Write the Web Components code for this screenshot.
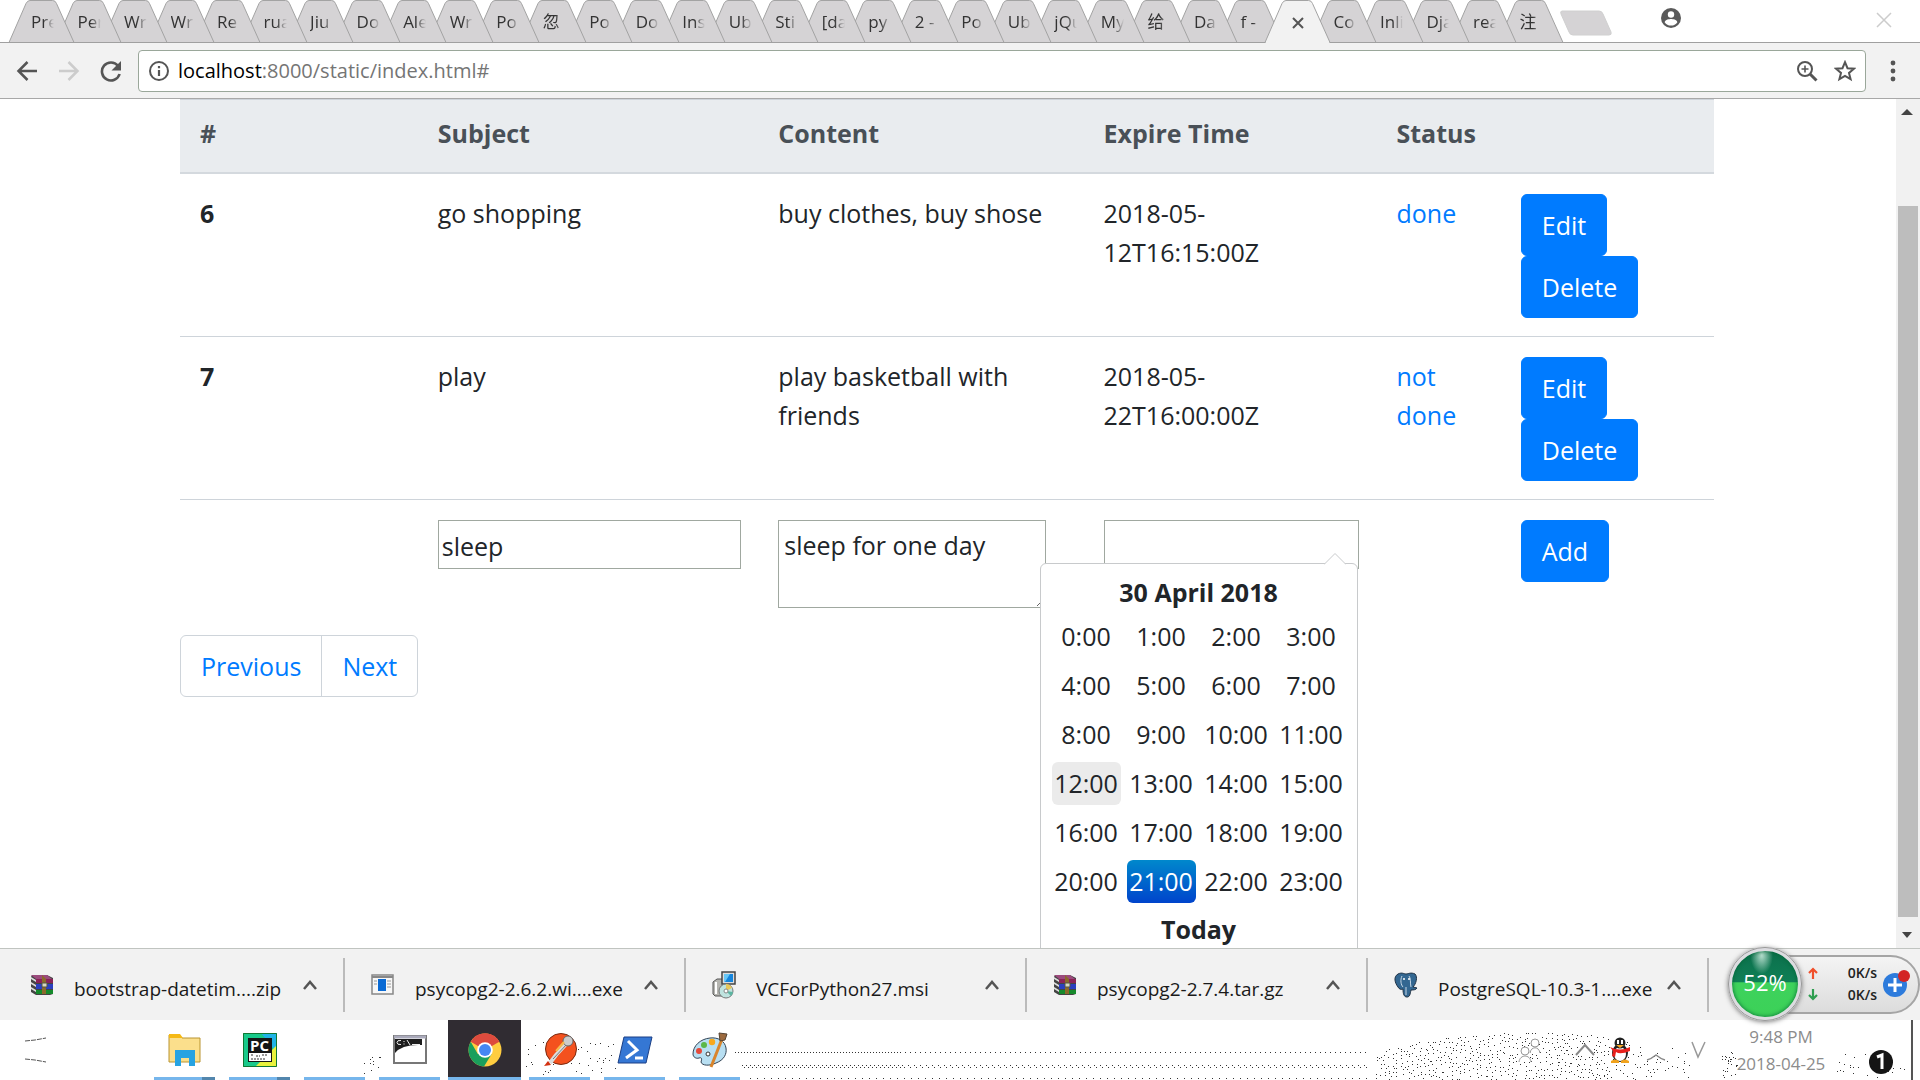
<!DOCTYPE html>
<html lang="en">
<head>
<meta charset="utf-8">
<title>index</title>
<style>
html,body{height:100%;margin:0;overflow:hidden}
body{font-family:"Open Sans","Noto Sans","Noto Sans CJK SC",sans-serif;color:#212529;background:#fff}
</style>
</head>
<body>
<desktop-screen>
  <tab-strip slot="tabs"></tab-strip>
  <nav-toolbar slot="toolbar"></nav-toolbar>
  <page-view slot="page"></page-view>
  <download-bar slot="downloads"></download-bar>
  <task-bar slot="taskbar"></task-bar>
</desktop-screen>
<script>
const define = (name, html) => customElements.define(name, class extends HTMLElement {
  constructor() {
    super();
    this.attachShadow({ mode: 'open' });
  }
  connectedCallback() {
    if (this.shadowRoot.childNodes.length) return;
    const t = document.createElement('template');
    t.innerHTML = typeof html === 'function' ? html(this) : html;
    this.shadowRoot.append(t.content.cloneNode(true));
  }
});

define('desktop-screen', `
<style>
:host{display:grid;grid-template-rows:43px 56px minmax(0,1fr) 72px 60px;height:100vh;background:#fff}
::slotted(*){min-width:0}
</style>
<slot name="tabs"></slot><slot name="toolbar"></slot><slot name="page"></slot><slot name="downloads"></slot><slot name="taskbar"></slot>`);

/* ---------- tab strip ---------- */
define('browser-tab', el => `
<style>
:host{display:block;flex:1 1 0;min-width:0;height:43px;position:relative}
svg{position:absolute;left:0;top:0;width:66px;height:43px;overflow:visible}
button{all:unset;position:relative;display:block;box-sizing:border-box;height:42px;width:44px;margin-left:22px;font-size:17px;line-height:43px;color:#333;white-space:nowrap;overflow:hidden}
.label{display:block;width:23px;overflow:hidden;-webkit-mask-image:linear-gradient(90deg,#000 55%,transparent);mask-image:linear-gradient(90deg,#000 55%,transparent)}
.x{margin-left:27px}
.x svg{position:static;width:12px;height:12px;vertical-align:middle}
</style>
<svg viewBox="0 0 66 43" aria-hidden="true"><path d="M0 42.5 L17 3.500 Q18.500 .5 21 .5 H43.500 Q46.500 .5 47.500 3.500 L65 42.500" fill="${el.hasAttribute('active') ? '#f2f2f2' : '#d5d3d5'}" stroke="#a3a3a3"/>${el.hasAttribute('active') ? '<path d="M1 42.500H64" stroke="#f2f2f2" stroke-width="2"/>' : '<path d="M0 42.500H66" stroke="#a0a0a0"/>'}</svg>
${el.hasAttribute('active')
  ? '<button class="x" aria-label="Close tab"><svg viewBox="0 0 12 12"><path d="M1 1l10 10M11 1L1 11" stroke="#555" stroke-width="2"/></svg></button>'
  : '<button><span class="label"><slot></slot></span></button>'}`);

const names = ['Pre','Per','Wr','Wr','Re','rua','Jiu','Do','Ale','Wr','Po','忽','Po','Do','Ins','Ub','Sti','[da','py','2 -','Po','Ub','jQu','My','给','Da','f -',null,'Co','Inli','Dja','rea','注'];
define('tab-strip', `
<style>
:host{display:flex;height:43px;background:linear-gradient(#a0a0a0,#a0a0a0) 0 42px/100% 1px no-repeat #fff;padding:0 28px 0 9px;box-sizing:border-box;isolation:isolate}
.tabs{display:flex;flex:0 1 1535px;min-width:0}
.new{all:unset;margin:10px 0 0 16px;width:52px;height:26px}
.acct{all:unset;margin:8px 0 0 49px;height:20px;width:20px}
.close{all:unset;margin:12px 0 0 auto;width:16px;height:16px}
svg{display:block}
</style>
<div class="tabs">${names.map((n, i) => n === null
  ? '<browser-tab active style="z-index:99"></browser-tab>'
  : `<browser-tab style="z-index:${60 - i}">${n}</browser-tab>`).join('')}</div>
<button class="new" aria-label="New tab"><svg width="52" height="26" viewBox="0 0 52 26"><path d="M2 1H39Q42 1 43 4L51 22Q52 25 49 25H13Q10 25 9 22L1 4Q0 1 2 1Z" fill="#d5d3d5" stroke="#d0d0d0"/></svg></button>
<button class="acct" aria-label="Account"><svg width="20" height="20" viewBox="0 0 20 20"><circle cx="10" cy="10" r="10" fill="#5a5a5a"/><circle cx="10" cy="6.500" r="3.200" fill="#fff"/><path d="M3.600 14.200C4.500 11.600 8 11 10 11s5.500.6 6.400 3.200A7.800 7.800 0 0 1 10 17.600a7.800 7.800 0 0 1-6.400-3.400z" fill="#fff"/></svg></button>
<button class="close" aria-label="Close window"><svg width="16" height="16" viewBox="0 0 16 16"><path d="M1 1l14 14M15 1L1 15" stroke="#ccc" stroke-width="1.500"/></svg></button>`);

/* ---------- toolbar ---------- */
define('nav-toolbar', `
<style>
:host{display:flex;align-items:center;height:56px;box-sizing:border-box;background:#f2f2f2;border-bottom:1px solid #a8a8a8;padding:0 16px 0 16px}
button{all:unset;display:block;width:22px;height:22px}
svg{display:block}
.nav{display:flex;gap:20px;margin-right:16px}
.box{flex:1;display:flex;align-items:center;height:42px;box-sizing:border-box;border:1px solid #9aa79a;border-radius:4px;background:#fff;padding:0 9px;min-width:0}
.addr{position:relative;flex:1;min-width:0;margin-left:8px;font-size:20px;line-height:28px;color:#757575;white-space:nowrap}
b{font-weight:400;color:#000}
.star{margin-left:16px}
.menu{margin-left:16px}
</style>
<div class="nav">
<button aria-label="Back"><svg width="22" height="22" viewBox="0 0 22 22" fill="none" stroke="#555" stroke-width="2.500"><path d="M21 11H3M11.500 2L2.500 11l9 9"/></svg></button>
<button aria-label="Forward"><svg width="22" height="22" viewBox="0 0 22 22" fill="none" stroke="#ccc" stroke-width="2.500"><path d="M1 11h18M10.500 2l9 9-9 9"/></svg></button>
<button aria-label="Reload"><svg width="22" height="22" viewBox="0 0 22 22"><path d="M18 5.800A9 9 0 1 0 19.600 14" fill="none" stroke="#555" stroke-width="2.600"/><path d="M21 1v9.500h-9.500z" fill="#555"/></svg></button>
</div>
<div class="box">
<button aria-label="Site information"><svg width="22" height="22" viewBox="0 0 22 22"><circle cx="11" cy="11" r="9" fill="none" stroke="#555" stroke-width="2"/><path d="M11 10v6M11 6v2.200" stroke="#555" stroke-width="2.200"/></svg></button>
<div class="addr"><b>localhost</b>:8000/static/index.html#</div>
<button aria-label="Zoom"><svg width="22" height="22" viewBox="0 0 22 22" fill="none" stroke="#555"><circle cx="9" cy="9" r="7" stroke-width="2"/><path d="M14 14l6.500 6.500" stroke-width="3"/><path d="M9 5.500v7M5.500 9h7" stroke-width="1.600"/></svg></button>
<button class="star" aria-label="Bookmark"><svg width="22" height="22" viewBox="0 0 22 22"><path d="M11 2.200l2.500 6 6.500.5-5 4.200 1.600 6.300L11 15.800l-5.600 3.400L7 12.900 2 8.700l6.500-.5z" fill="none" stroke="#555" stroke-width="2"/></svg></button>
</div>
<button class="menu" aria-label="Menu"><svg width="22" height="22" viewBox="0 0 22 22" fill="#555"><circle cx="11" cy="3" r="2.400"/><circle cx="11" cy="11" r="2.400"/><circle cx="11" cy="19" r="2.400"/></svg></button>`);

/* ---------- page ---------- */
define('page-view', `
<style>
:host{display:flex;background:#fff;overflow:hidden;min-height:0}
main{flex:1;min-width:0;overflow:hidden;font-size:25px;line-height:39px;padding-right:2px}
.container{max-width:1534px;margin:0 auto}
</style>
<main><div class="container"><todo-table></todo-table><page-nav></page-nav></div></main>
<scroll-bar></scroll-bar>`);

define('scroll-bar', `
<style>
:host{display:flex;flex-direction:column;align-items:center;flex:0 0 24px;background:#f1f1f1}
svg{flex:none;display:block}
.track{flex:1;width:20px;display:flex;flex-direction:column;padding:83px 0 7px}
.thumb{flex:1;background:#bdbdbd}
</style>
<svg width="24" height="24" viewBox="0 0 24 24"><path d="M5 16h12L11 10z" fill="#444"/></svg>
<div class="track"><div class="thumb"></div></div>
<svg width="24" height="24" viewBox="0 0 24 24"><path d="M6 8h10l-5 6z" fill="#444"/></svg>`);

define('primary-button', `
<style>
:host{display:block}
button{display:block;box-sizing:border-box;height:62px;border:1px solid #007bff;border-radius:6px;background:#007bff;color:#fff;font:inherit;padding:0 20px;cursor:pointer;white-space:nowrap}
</style><button type="button"><slot></slot></button>`);

define('todo-table', `
<style>
:host{display:block}
table{width:100%;table-layout:fixed;border-collapse:collapse}
th,td{padding:20px 20px 18px;text-align:left;vertical-align:top;border-top:1px solid #ced4da}
tbody tr:first-child>*{border-top:0}
thead th{padding:14px 20px 19px;background:#e9ecef;color:#495057;border-bottom:2px solid #d4d9de}
a{color:#007bff;text-decoration:none}
.act{display:flex;flex-direction:column;align-items:flex-start}
input,textarea{display:block;box-sizing:border-box;width:calc(100% + 3px);height:49px;margin:0;border:1px solid #a0a8a0;border-radius:0;padding:2px 3px 0;font:inherit;color:#212529;background:#fff;outline:0}
textarea{width:calc(100% - 18px);height:88px;padding:5px 5px 0;resize:both;line-height:39px}
.when{position:relative;width:255px}
.when input{width:100%}
time-picker{position:absolute;top:43px;right:1px;z-index:5}
</style>
<table>
<colgroup><col style="width:15.5%"><col style="width:22.2%"><col style="width:21.2%"><col style="width:19.1%"><col style="width:8.1%"><col></colgroup>
<thead><tr><th scope="col">#</th><th scope="col">Subject</th><th scope="col">Content</th><th scope="col">Expire Time</th><th scope="col">Status</th><th></th></tr></thead>
<tbody>
<tr><th scope="row">6</th><td>go shopping</td><td>buy clothes, buy shose</td><td>2018-05-12T16:15:00Z</td><td><a href="#">done</a></td><td><div class="act"><primary-button>Edit</primary-button><primary-button>Delete</primary-button></div></td></tr>
<tr><th scope="row">7</th><td>play</td><td>play basketball with friends</td><td>2018-05-22T16:00:00Z</td><td><a href="#">not done</a></td><td><div class="act"><primary-button>Edit</primary-button><primary-button>Delete</primary-button></div></td></tr>
<tr><td></td><td><input type="text" value="sleep" aria-label="Subject"></td><td><textarea aria-label="Content">sleep for one day</textarea></td><td><div class="when"><input type="text" aria-label="Expire Time"><time-picker></time-picker></div></td><td></td><td><div class="act"><primary-button>Add</primary-button></div></td></tr>
</tbody>
</table>`);

define('time-picker', `
<style>
:host{display:block;box-sizing:border-box;width:318px;height:420px;padding:9px 9px;background:#fff;border:1px solid #c8cacc;border-radius:6px;text-align:center}
.tip{position:absolute;top:-12px;right:11px;display:block}
.head{font-weight:700;line-height:39px}
.grid{display:grid;grid-template-columns:repeat(4,69px);gap:6px;justify-content:space-between;margin:3px 2px 0}
button{all:unset;height:43px;line-height:43px;border-radius:6px;text-align:center;font-size:25px}
.hov{background:#ebebeb}
.on{background:linear-gradient(#0088cc,#0044cc);color:#fff}
.today{font-weight:700;line-height:39px;margin-top:7px}
</style>
<svg class="tip" width="22" height="13" viewBox="0 0 22 13"><path d="M0 12.500L11 1.500l11 11" fill="#fff" stroke="#c8cacc"/></svg>
<div class="head">30 April 2018</div>
<div class="grid">${Array.from({ length: 24 }, (_, h) => `<button type="button"${h === 12 ? ' class="hov"' : h === 21 ? ' class="on"' : ''}>${h}:00</button>`).join('')}</div>
<div class="today">Today</div>`);

define('page-nav', `
<style>
:host{display:block;margin-top:9px}
nav{display:inline-flex;border:1px solid #ced4da;border-radius:6px}
a{color:#007bff;text-decoration:none;height:60px;line-height:60px;padding:0 20px}
a+a{border-left:1px solid #ced4da}
</style><nav aria-label="Pages"><a href="#">Previous</a><a href="#">Next</a></nav>`);

/* ---------- downloads ---------- */
const rar = `<svg width="24" height="22" viewBox="0 0 24 22"><path d="M2 1h15l6 3v16l-3 1H6L1 18V3z" fill="#444"/><path d="M1 1h16l5 4H6z" fill="#9b4b7d"/><path d="M6 5h17v4H6z" fill="#8a2258"/><path d="M6 10h17v5H6z" fill="#2b3fc0"/><path d="M6 16h17v4H6z" fill="#168a2c"/><path d="M1 3l5 3v2L1 5zM1 8l5 3v2L1 10zM1 13l5 3v2l-5-3z" fill="#ddd"/><path d="M12 1l4 4v15h-4z" fill="#8b6a2a"/><path d="M12 9h5v4h-5z" fill="#d8d8c0" stroke="#554"/></svg>`;
const exe = `<svg width="24" height="22" viewBox="0 0 24 22"><path d="M1 1h21v19H1z" fill="#f7f7f7" stroke="#888" stroke-width="1.500"/><path d="M1 3h21" stroke="#888" stroke-width="2"/><path d="M7 5h8v12H7z" fill="#0a6ad4"/><path d="M3 7h3M3 10h3M16 7h4M16 10h4M16 13h4" stroke="#999"/></svg>`;
const msi = `<svg width="24" height="28" viewBox="0 0 24 28"><path d="M1 11l4-3h6v17H3l-2-2z" fill="#b5b5b0" stroke="#555"/><path d="M4 11v12" stroke="#fff" stroke-width="2"/><path d="M10 1h13v12H10z" fill="#ddd" stroke="#444" stroke-width="1.500"/><path d="M12 3h9v8h-9z" fill="#1585dd"/><path d="M12 3h6l-5 8h-1z" fill="#67c7f6"/><circle cx="14" cy="20" r="7" fill="#bfe3df" stroke="#777"/><path d="M14 13a7 7 0 0 1 6 4l-6 3z" fill="#e8c75a"/><path d="M14 20l5 5a7 7 0 0 0 2-4z" fill="#5cb6a2"/><circle cx="14" cy="20" r="2" fill="#fff" stroke="#888"/></svg>`;
const pg = `<svg width="24" height="26" viewBox="0 0 24 26"><path d="M4 2C8 0 10 2 12 2s5-2 9 0c3 3 1 10-2 13l4 1c-1 2-4 2-6 2-1 4-1 7-4 7s-4-3-4-8c-2 1-4 0-5-2C1 11-1 5 4 2z" fill="#336791" stroke="#1f3144"/><path d="M8 4C6 8 7 13 9 15M15 4c2 2 1 7 2 11M12 15v8" fill="none" stroke="#c8d8e6"/><circle cx="10" cy="7" r="1" fill="#fff"/><circle cx="15" cy="7" r="1" fill="#fff"/></svg>`;

define('download-item', el => `
<style>
:host{display:flex;align-items:center;flex:0 1 341px;min-width:0;height:54px;box-sizing:border-box;border-right:2px solid #bbb;padding:0 25px 0 26px;font-size:19px;line-height:28px;color:#1a1a1a}
.ic{flex:none;width:24px;display:flex;margin:0 20px 0 0}
.t{flex:1;white-space:nowrap;padding-top:8px;min-width:0}
button{all:unset;width:16px;height:12px}
svg{display:block}
</style>
<span class="ic">${{ rar, exe, msi, pg }[el.getAttribute('kind')]}</span><span class="t"><slot></slot></span>
<button aria-label="More actions"><svg width="16" height="12" viewBox="0 0 16 12"><path d="M2 10l6-7 6 7" fill="none" stroke="#555" stroke-width="2.500"/></svg></button>`);

define('download-bar', `
<style>
:host{display:flex;align-items:flex-start;box-sizing:border-box;height:72px;background:#f2f2f2;border-top:1px solid #c0c4c0;padding:9px 0 0 4px;position:relative}
net-meter{position:absolute;right:0;top:-2px}
</style>
<download-item kind="rar">bootstrap-datetim....zip</download-item>
<download-item kind="exe">psycopg2-2.6.2.wi....exe</download-item>
<download-item kind="msi">VCForPython27.msi</download-item>
<download-item kind="rar">psycopg2-2.7.4.tar.gz</download-item>
<download-item kind="pg">PostgreSQL-10.3-1....exe</download-item>
<net-meter></net-meter>`);

define('net-meter', `
<style>
:host{display:flex;align-items:center;width:192px;height:74px}
.ball{position:relative;flex:none;width:74px;height:74px;box-sizing:border-box;border-radius:50%;border:4px solid #dcdce0;outline:1px solid #999;outline-offset:-1px;background:radial-gradient(ellipse at 45% 6%,#b8e0d0 0,transparent 22%),linear-gradient(#0c6f4c 0,#0f7f55 47%,#3ed25c 48%,#3cd158 100%);box-shadow:0 1px 5px #777, inset 0 0 4px #063;color:#fff;font-size:22px;line-height:62px;text-align:center;z-index:1}
.cap{flex:1;display:flex;align-items:center;height:59px;box-sizing:border-box;margin-left:-30px;padding:0 8px 0 34px;border:2px solid #a5a5a5;border-radius:0 30px 30px 0;background:linear-gradient(#f4f4f4,#dcdcdc);gap:5px}
.rates{flex:1;font-size:14px;line-height:22px;font-weight:600;color:#222}
.rates div{display:flex;justify-content:space-between;align-items:center}
svg{display:block}
</style>
<div class="ball">52%</div>
<div class="cap"><div class="rates">
<div><svg width="10" height="12" viewBox="0 0 10 12"><path d="M5 12V3M1 6l4-4 4 4" fill="none" stroke="#f0502c" stroke-width="2.200"/></svg><span>0K/s</span></div>
<div><svg width="10" height="12" viewBox="0 0 10 12"><path d="M5 0v9M1 6l4 4 4-4" fill="none" stroke="#2e9e50" stroke-width="2.200"/></svg><span>0K/s</span></div></div>
<svg width="28" height="34" viewBox="0 0 28 34"><circle cx="13" cy="18" r="12" fill="#2d7bdc"/><path d="M13 11v14M6 18h14" stroke="#fff" stroke-width="3"/><circle cx="22" cy="9" r="6" fill="#d32424"/></svg></div>`);

/* ---------- taskbar ---------- */
const icons = {
explorer:`<svg width="34" height="34" viewBox="0 0 34 34"><path d="M1 2h10l3 3h18v24H1z" fill="#fbdf8c" stroke="#b99430"/><path d="M1 1h11l3 4H1z" fill="#f5b915"/><path d="M7 17h20v16h-6v-8h-8v8H7z" fill="#27a3e2"/></svg>`,
pycharm:`<svg width="34" height="34" viewBox="0 0 34 34"><path d="M0 0h34v34H0z" fill="#18c98a"/><path d="M18 0h16v20z" fill="#1fb3e6"/><path d="M34 12v22H12z" fill="#e9f23c"/><path d="M5 5h24v24H5z" fill="#151515"/><path d="M6 20h22v8H6z" fill="#fff"/><text x="7" y="18" font-family="Open Sans" font-weight="700" font-size="15" fill="#fff">PC</text><path d="M8 22h3m2 1h4m2-1h5M8 26h14" stroke="#333" stroke-dasharray="2 1"/><path d="M.5 .5h33v33H.5z" fill="none" stroke="#173"/></svg>`,
none:`<svg width="34" height="34"></svg>`,
cmd:`<svg width="34" height="30" viewBox="0 0 34 30"><path d="M1 1h32v27H1z" fill="#fff" stroke="#777" stroke-width="2"/><path d="M1 2h32" stroke="#aab" stroke-width="3"/><path d="M2 4h27v6Q9 9 2 18z" fill="#1d1d1d"/><path d="M8 5.500Q4 5 4 7.500T8 9.500M11 6v1M11 8.500v1M14 5l3 5M19 9.500h8" stroke="#eee" fill="none"/></svg>`,
chrome:`<svg width="34" height="34" viewBox="0 0 34 34"><circle cx="17" cy="17" r="16.500" fill="#ffcd40"/><path d="M17 17L2.700 8.700A16.500 16.500 0 0 1 31.300 8.700z" fill="#dd4b3e"/><path d="M17 8.700h14.300A16.500 16.500 0 0 0 5 5.700l4.800 7z" fill="#dd4b3e"/><path d="M2.700 8.700A16.500 16.500 0 0 0 16 33.500l7.500-12.300L17 17 9.800 21z" fill="#1a9f5c"/><circle cx="17" cy="17" r="7.800" fill="#fff"/><circle cx="17" cy="17" r="6" fill="#4587f3"/></svg>`,
postman:`<svg width="34" height="36" viewBox="0 0 34 36"><circle cx="18" cy="17" r="15.500" fill="#f4511e" stroke="#7a2a10"/><path d="M25 10L13 23l-6 8" stroke="#ddd" stroke-width="4" fill="none"/><path d="M24 12L10 27" stroke="#777"/><circle cx="25" cy="9" r="5" fill="#ccc" stroke="#666"/><path d="M13 19l8-9" stroke="#f8b94a" stroke-width="2"/><path d="M1 34l4-5 3 4z" fill="#d33010"/></svg>`,
ps:`<svg width="36" height="28" viewBox="0 0 36 28"><path d="M7 1h28l-6 26H1z" fill="#3577d4" stroke="#1b3f85"/><path d="M11 5l9 9L9 22" fill="none" stroke="#fff" stroke-width="3"/><path d="M18 22h8" stroke="#fff" stroke-width="3"/></svg>`,
paint:`<svg width="36" height="36" viewBox="0 0 36 36"><path d="M18 6C8 7 1 14 1 22c0 3 3 5 6 4 3-1 3 1 2 4 1 4 9 4 15 1 8-3 11-9 10-15C33 9 26 5 18 6z" fill="#b8dff2" stroke="#345"/><circle cx="7" cy="19" r="3" fill="#e54a3a"/><circle cx="12" cy="13" r="3" fill="#5cb848"/><circle cx="20" cy="10" r="3.200" fill="#f8a81c"/><circle cx="16" cy="22" r="2" fill="#fff" stroke="#333"/><path d="M30 7L19 35" stroke="#d9852c" stroke-width="3"/><path d="M27 1l8 1-2 6-5 1z" fill="#9c6a3e" stroke="#543"/></svg>`
};
define('task-button', el => `
<style>
:host{display:block;flex:0 0 75px;height:60px}
:host([active]){--tile:#302c32;--w:73px;--m:0 0 0 -6px}
button{all:unset;box-sizing:border-box;display:flex;align-items:center;justify-content:center;width:var(--w,61px);margin:var(--m,0);height:60px;border-bottom:3px solid #76b6ec;padding-top:3px;background:var(--tile,transparent)}
:host([stack]) button{border-image:linear-gradient(90deg,#76b6ec 77%,#5286ad 77%) 1}
:host([stack]) button{border-width:0 0 3px;border-style:solid}
</style><button aria-label="${el.getAttribute('icon')}">${icons[el.getAttribute('icon')]}</button>`);

/* scattered single-pixel grain along the empty part of the bar */
function specks() {
  let s = 71, d = '';
  const rnd = () => (s = (s * 16807) % 2147483647) / 2147483647;
  const dot = (x, y) => { d += `M${Math.round(x)} ${Math.round(y)}h1v1h-1z`; };
  for (let x = 735; x < 1370; x += x < 900 ? 3 : 5) dot(x, 32);
  for (let x = 742; x < 1370; x += x < 900 ? 4 : 6) { dot(x, 45); dot(x + 2, 47); }
  for (let x = 750; x < 1370; x += 7) dot(x, 58);
  for (let x = 1375; x < 1690; x += 4) {
    const top = 12 + Math.pow(Math.abs(x - 1530) / 150, 2) * 18;
    for (let y = top; y < 60; y += 4) if (rnd() > (x > 1610 ? .65 : .25)) dot(x + rnd() * 3, y + rnd() * 3);
  }
  for (let i = 0; i < 60; i++) dot(rnd() < .5 ? 1722 + rnd() * 16 : 1834 + rnd() * 70, 32 + rnd() * 26);
  for (let i = 0; i < 45; i++) dot(525 + rnd() * 90, 22 + rnd() * 34);
  for (let i = 0; i < 12; i++) dot(360 + rnd() * 20, 32 + rnd() * 22);
  return d;
}
define('task-bar', `
<style>
:host{display:flex;height:60px;background:#fff;position:relative;overflow:hidden}
.grain{position:absolute;left:0;top:0;pointer-events:none}
.start{all:unset;width:130px;height:60px;padding-left:25px;box-sizing:border-box}
.apps{display:flex;flex:1;margin-left:24px;position:relative}
.tray{display:flex;align-items:center;position:relative;padding-right:7px;box-sizing:border-box}
.tray svg{display:block;flex:none}
.clock{width:138px;text-align:center;font-size:17px;line-height:27px;color:#8c8c8c}
.tray .people{margin-right:33px}.tray .up{margin-right:14px}.tray .qq{margin-right:15px}.tray .net{margin:16px 25px 0 0}.tray .vol{margin-right:6px}
.tray .note{margin:24px 18px 0 19px}
.edge{width:2px;height:60px;background:#555}
</style>
<svg class="grain" width="1920" height="60" viewBox="0 0 1920 60" aria-hidden="true"><path d="${specks()}" fill="#333"/></svg>
<button class="start" aria-label="Start"><svg width="22" height="60" viewBox="0 0 22 60"><path d="M0 21l10-1 11-2M0 39l10 1 11 2" fill="none" stroke="#555" stroke-dasharray="5 1"/></svg></button>
<div class="apps">
<task-button icon="explorer" stack></task-button><task-button icon="pycharm" stack></task-button><task-button icon="none"></task-button><task-button icon="cmd"></task-button><task-button icon="chrome" active></task-button><task-button icon="postman"></task-button><task-button icon="ps"></task-button><task-button icon="paint"></task-button>
</div>
<div class="tray">
<svg class="people" width="24" height="26" viewBox="0 0 24 26" fill="#fff" stroke="#999"><circle cx="17" cy="6" r="4"/><path d="M12 16c1-7 9-7 10 0"/><circle cx="7" cy="14" r="4"/><path d="M1 25c1-8 11-8 12 0"/></svg>
<svg class="up" width="20" height="14" viewBox="0 0 20 14"><path d="M1 12l9-10 9 10" fill="#fff" stroke="#888" stroke-width="2"/></svg>
<svg class="qq" width="22" height="26" viewBox="0 0 22 26"><ellipse cx="11" cy="16" rx="8" ry="9" fill="#222"/><ellipse cx="11" cy="17" rx="6" ry="7" fill="#fff"/><circle cx="11" cy="6" r="5.500" fill="#222"/><path d="M8 3h2v4H8zM12 3h2v4h-2z" fill="#fff"/><path d="M7 8h8l-4 3z" fill="#f6a623"/><path d="M1 10q10 5 20 0v4q-10 4-14 1l-1 5-3-1 1-5z" fill="#e8211d"/><path d="M2 24q4-3 8 0v2H2zM12 24q4-3 8 0v2h-8z" fill="#f0a21c"/></svg>
<svg class="net" width="20" height="8" viewBox="0 0 20 8"><path d="M1 6q4-1 9-5 5 4 9 5" fill="none" stroke="#888" stroke-width="1.500"/></svg>
<svg class="vol" width="15" height="18" viewBox="0 0 15 18"><path d="M1 1l6 15 7-15" fill="none" stroke="#999" stroke-width="1.500"/></svg>
<div class="clock"><div>9:48 PM</div><div>2018-04-25</div></div>
<svg class="note" width="24" height="24" viewBox="0 0 24 24"><circle cx="12" cy="12" r="12" fill="#151515"/><path d="M8 7l5-2v14" fill="none" stroke="#fff" stroke-width="3"/></svg>
<div class="edge"></div>
</div>`);
</script>
</body>
</html>
